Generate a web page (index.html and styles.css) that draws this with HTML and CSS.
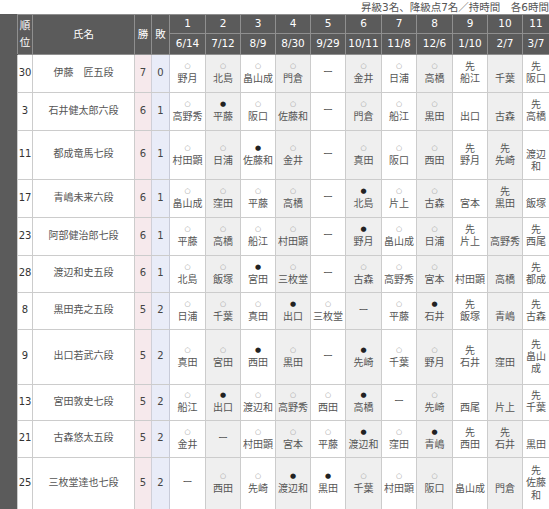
FILE: index.html
```html
<!DOCTYPE html>
<html lang="ja">
<head>
<meta charset="utf-8">
<title>順位戦</title>
<link rel="stylesheet" href="styles.css">
</head>
<body>
<div class="note">昇級3名、降級点7名／持時間　各6時間</div>
<table class="league">
  <colgroup>
    <col class="c-side"><col class="c-rank"><col class="c-name"><col class="c-win"><col class="c-loss">
    <col class="g w36"><col class="g alt"><col class="g"><col class="g alt"><col class="g">
    <col class="g alt w36"><col class="g"><col class="g alt w36"><col class="g"><col class="g alt"><col class="g last">
  </colgroup>
  <thead>
    <tr class="h1">
      <th class="side" rowspan="2"></th>
      <th rowspan="2">順位</th>
      <th rowspan="2">氏名</th>
      <th rowspan="2">勝</th>
      <th rowspan="2">敗</th>
      <th>1</th><th>2</th><th>3</th><th>4</th><th>5</th><th>6</th><th>7</th><th>8</th><th>9</th><th>10</th><th>11</th>
    </tr>
    <tr class="h2">
      <th>6/14</th><th>7/12</th><th>8/9</th><th>8/30</th><th>9/29</th><th>10/11</th><th>11/8</th><th>12/6</th><th>1/10</th><th>2/7</th><th>3/7</th>
    </tr>
  </thead>
  <tbody>
    <tr class="r38">
      <td class="side" rowspan="11"></td>
      <td class="rank">30</td><td class="name">伊藤　匠五段</td><td class="win">7</td><td class="loss">0</td>
      <td><span class="mk o">○</span><span class="nm">野月</span></td>
      <td><span class="mk o">○</span><span class="nm">北島</span></td>
      <td><span class="mk o">○</span><span class="nm">畠山成</span></td>
      <td><span class="mk o">○</span><span class="nm">門倉</span></td>
      <td><span class="dash">ー</span></td>
      <td><span class="mk o">○</span><span class="nm">金井</span></td>
      <td><span class="mk o">○</span><span class="nm">日浦</span></td>
      <td><span class="mk o">○</span><span class="nm">高橋</span></td>
      <td><span class="mk s">先</span><span class="nm">船江</span></td>
      <td><span class="mk"></span><span class="nm">千葉</span></td>
      <td><span class="mk s">先</span><span class="nm">阪口</span></td>
    </tr>
    <tr class="r38">
      <td class="rank">3</td><td class="name">石井健太郎六段</td><td class="win">6</td><td class="loss">1</td>
      <td><span class="mk o">○</span><span class="nm">高野秀</span></td>
      <td><span class="mk x">●</span><span class="nm">平藤</span></td>
      <td><span class="mk o">○</span><span class="nm">阪口</span></td>
      <td><span class="mk o">○</span><span class="nm">佐藤和</span></td>
      <td><span class="dash">ー</span></td>
      <td><span class="mk o">○</span><span class="nm">門倉</span></td>
      <td><span class="mk o">○</span><span class="nm">船江</span></td>
      <td><span class="mk o">○</span><span class="nm">黒田</span></td>
      <td><span class="mk"></span><span class="nm">出口</span></td>
      <td><span class="mk"></span><span class="nm">古森</span></td>
      <td><span class="mk s">先</span><span class="nm">高橋</span></td>
    </tr>
    <tr class="r49">
      <td class="rank">11</td><td class="name">都成竜馬七段</td><td class="win">6</td><td class="loss">1</td>
      <td><span class="mk o">○</span><span class="nm">村田顕</span></td>
      <td><span class="mk o">○</span><span class="nm">日浦</span></td>
      <td><span class="mk x">●</span><span class="nm">佐藤和</span></td>
      <td><span class="mk o">○</span><span class="nm">金井</span></td>
      <td><span class="dash">ー</span></td>
      <td><span class="mk o">○</span><span class="nm">真田</span></td>
      <td><span class="mk o">○</span><span class="nm">阪口</span></td>
      <td><span class="mk o">○</span><span class="nm">西田</span></td>
      <td><span class="mk s">先</span><span class="nm">野月</span></td>
      <td><span class="mk s">先</span><span class="nm">先崎</span></td>
      <td><span class="mk"></span><span class="nm">渡辺和</span></td>
    </tr>
    <tr class="r38">
      <td class="rank">17</td><td class="name">青嶋未来六段</td><td class="win">6</td><td class="loss">1</td>
      <td><span class="mk o">○</span><span class="nm">畠山成</span></td>
      <td><span class="mk o">○</span><span class="nm">窪田</span></td>
      <td><span class="mk o">○</span><span class="nm">平藤</span></td>
      <td><span class="mk o">○</span><span class="nm">高橋</span></td>
      <td><span class="dash">ー</span></td>
      <td><span class="mk x">●</span><span class="nm">北島</span></td>
      <td><span class="mk o">○</span><span class="nm">片上</span></td>
      <td><span class="mk o">○</span><span class="nm">古森</span></td>
      <td><span class="mk"></span><span class="nm">宮本</span></td>
      <td><span class="mk s">先</span><span class="nm">黒田</span></td>
      <td><span class="mk"></span><span class="nm">飯塚</span></td>
    </tr>
    <tr class="r38">
      <td class="rank">23</td><td class="name">阿部健治郎七段</td><td class="win">6</td><td class="loss">1</td>
      <td><span class="mk o">○</span><span class="nm">平藤</span></td>
      <td><span class="mk o">○</span><span class="nm">高橋</span></td>
      <td><span class="mk o">○</span><span class="nm">船江</span></td>
      <td><span class="mk o">○</span><span class="nm">村田顕</span></td>
      <td><span class="dash">ー</span></td>
      <td><span class="mk x">●</span><span class="nm">野月</span></td>
      <td><span class="mk o">○</span><span class="nm">畠山成</span></td>
      <td><span class="mk o">○</span><span class="nm">日浦</span></td>
      <td><span class="mk s">先</span><span class="nm">片上</span></td>
      <td><span class="mk"></span><span class="nm">高野秀</span></td>
      <td><span class="mk s">先</span><span class="nm">西尾</span></td>
    </tr>
    <tr class="r37">
      <td class="rank">28</td><td class="name">渡辺和史五段</td><td class="win">6</td><td class="loss">1</td>
      <td><span class="mk o">○</span><span class="nm">北島</span></td>
      <td><span class="mk o">○</span><span class="nm">飯塚</span></td>
      <td><span class="mk x">●</span><span class="nm">宮田</span></td>
      <td><span class="mk o">○</span><span class="nm">三枚堂</span></td>
      <td><span class="dash">ー</span></td>
      <td><span class="mk o">○</span><span class="nm">古森</span></td>
      <td><span class="mk o">○</span><span class="nm">高野秀</span></td>
      <td><span class="mk o">○</span><span class="nm">宮本</span></td>
      <td><span class="mk"></span><span class="nm">村田顕</span></td>
      <td><span class="mk"></span><span class="nm">高橋</span></td>
      <td><span class="mk s">先</span><span class="nm">都成</span></td>
    </tr>
    <tr class="r37">
      <td class="rank">8</td><td class="name">黒田尭之五段</td><td class="win">5</td><td class="loss">2</td>
      <td><span class="mk o">○</span><span class="nm">日浦</span></td>
      <td><span class="mk o">○</span><span class="nm">千葉</span></td>
      <td><span class="mk o">○</span><span class="nm">真田</span></td>
      <td><span class="mk x">●</span><span class="nm">出口</span></td>
      <td><span class="mk o">○</span><span class="nm">三枚堂</span></td>
      <td><span class="dash">ー</span></td>
      <td><span class="mk o">○</span><span class="nm">平藤</span></td>
      <td><span class="mk x">●</span><span class="nm">石井</span></td>
      <td><span class="mk s">先</span><span class="nm">飯塚</span></td>
      <td><span class="mk"></span><span class="nm">青嶋</span></td>
      <td><span class="mk s">先</span><span class="nm">古森</span></td>
    </tr>
    <tr class="r55">
      <td class="rank">9</td><td class="name">出口若武六段</td><td class="win">5</td><td class="loss">2</td>
      <td><span class="mk o">○</span><span class="nm">真田</span></td>
      <td><span class="mk o">○</span><span class="nm">宮田</span></td>
      <td><span class="mk x">●</span><span class="nm">西田</span></td>
      <td><span class="mk o">○</span><span class="nm">黒田</span></td>
      <td><span class="dash">ー</span></td>
      <td><span class="mk x">●</span><span class="nm">先崎</span></td>
      <td><span class="mk o">○</span><span class="nm">千葉</span></td>
      <td><span class="mk o">○</span><span class="nm">野月</span></td>
      <td><span class="mk s">先</span><span class="nm">石井</span></td>
      <td><span class="mk"></span><span class="nm">窪田</span></td>
      <td><span class="mk s">先</span><span class="nm">畠山成</span></td>
    </tr>
    <tr class="r36">
      <td class="rank">13</td><td class="name">宮田敦史七段</td><td class="win">5</td><td class="loss">2</td>
      <td><span class="mk o">○</span><span class="nm">船江</span></td>
      <td><span class="mk x">●</span><span class="nm">出口</span></td>
      <td><span class="mk o">○</span><span class="nm">渡辺和</span></td>
      <td><span class="mk o">○</span><span class="nm">高野秀</span></td>
      <td><span class="mk o">○</span><span class="nm">西田</span></td>
      <td><span class="mk x">●</span><span class="nm">高橋</span></td>
      <td><span class="dash">ー</span></td>
      <td><span class="mk o">○</span><span class="nm">先崎</span></td>
      <td><span class="mk"></span><span class="nm">西尾</span></td>
      <td><span class="mk"></span><span class="nm">片上</span></td>
      <td><span class="mk s">先</span><span class="nm">千葉</span></td>
    </tr>
    <tr class="r37">
      <td class="rank">21</td><td class="name">古森悠太五段</td><td class="win">5</td><td class="loss">2</td>
      <td><span class="mk o">○</span><span class="nm">金井</span></td>
      <td><span class="dash">ー</span></td>
      <td><span class="mk o">○</span><span class="nm">村田顕</span></td>
      <td><span class="mk o">○</span><span class="nm">宮本</span></td>
      <td><span class="mk o">○</span><span class="nm">平藤</span></td>
      <td><span class="mk x">●</span><span class="nm">渡辺和</span></td>
      <td><span class="mk o">○</span><span class="nm">窪田</span></td>
      <td><span class="mk x">●</span><span class="nm">青嶋</span></td>
      <td><span class="mk s">先</span><span class="nm">西田</span></td>
      <td><span class="mk s">先</span><span class="nm">石井</span></td>
      <td><span class="mk"></span><span class="nm">黒田</span></td>
    </tr>
    <tr class="r52">
      <td class="rank">25</td><td class="name">三枚堂達也七段</td><td class="win">5</td><td class="loss">2</td>
      <td><span class="dash">ー</span></td>
      <td><span class="mk o">○</span><span class="nm">西田</span></td>
      <td><span class="mk o">○</span><span class="nm">先崎</span></td>
      <td><span class="mk x">●</span><span class="nm">渡辺和</span></td>
      <td><span class="mk x">●</span><span class="nm">黒田</span></td>
      <td><span class="mk o">○</span><span class="nm">千葉</span></td>
      <td><span class="mk o">○</span><span class="nm">村田顕</span></td>
      <td><span class="mk o">○</span><span class="nm">阪口</span></td>
      <td><span class="mk"></span><span class="nm">畠山成</span></td>
      <td><span class="mk"></span><span class="nm">門倉</span></td>
      <td><span class="mk s">先</span><span class="nm">佐藤和</span></td>
    </tr>
  </tbody>
</table>
</body>
</html>
```

FILE: styles.css
```css
* { box-sizing: border-box; }
html, body { margin: 0; padding: 0; background: #fff; }
body {
  width: 549px;
  overflow: hidden;
  font-family: "DejaVu Sans", "Noto Sans CJK JP", sans-serif;
  font-size: 10px;
  color: #4a4a4a;
}
.note {
  height: 14px;
  padding-top: 1px;
  line-height: 13px;
  font-size: 10.5px;
  text-align: right;
  color: #555;
  white-space: nowrap;
}
.league {
  width: 549px;
  table-layout: fixed;
  border-collapse: collapse;
}
.c-side { width: 17px; }
.c-rank { width: 15px; }
.c-name { width: 102px; }
.c-win { width: 17px; background: #f6e9ec; }
.c-loss { width: 18px; background: #e9ecf8; }
.g { width: 35px; }
.g.w36 { width: 36px; }
.g.alt { background: #efefef; }
.g.last { width: 27px; }

th {
  padding: 0;
  background: #5b5b5b;
  color: #fff;
  font-weight: normal;
  font-size: 10.5px;
  line-height: 17.5px;
  text-align: center;
  vertical-align: middle;
  border: 1px solid #8f8f8f;
  white-space: normal;
}
.h1 { height: 18px; }
.h2 { height: 21px; }
th.side { border-color: #5b5b5b; border-right-color: #8f8f8f; }

td {
  padding: 0 1px;
  border: 1px solid #cccccc;
  text-align: center;
  vertical-align: middle;
  line-height: 12.5px;
}
td.side { background: #5b5b5b; border-color: #5b5b5b; border-right-color: #cccccc; }
td.rank { padding: 0; color: #333; }
td.name { color: #555; }
td.win { border-left-color: #d9c9cd; border-right-color: #cfcfd8; color: #444; }
td.loss { border-right-color: #c8cbd9; color: #444; }

.r36 { height: 36px; }
.r37 { height: 37px; }
.r38 { height: 38px; }
.r49 { height: 49px; }
.r52 { height: 52px; }
.r55 { height: 55px; }

.mk { display: block; height: 13px; line-height: 13px; }
.mk.o { font-size: 7px; color: #999; }
.mk.x { font-size: 7px; color: #222; }
.mk.s { font-size: 10px; color: #555; }
.nm { display: block; color: #555; }
.dash { color: #555; font-family: "Noto Sans CJK JP", sans-serif; }
```
